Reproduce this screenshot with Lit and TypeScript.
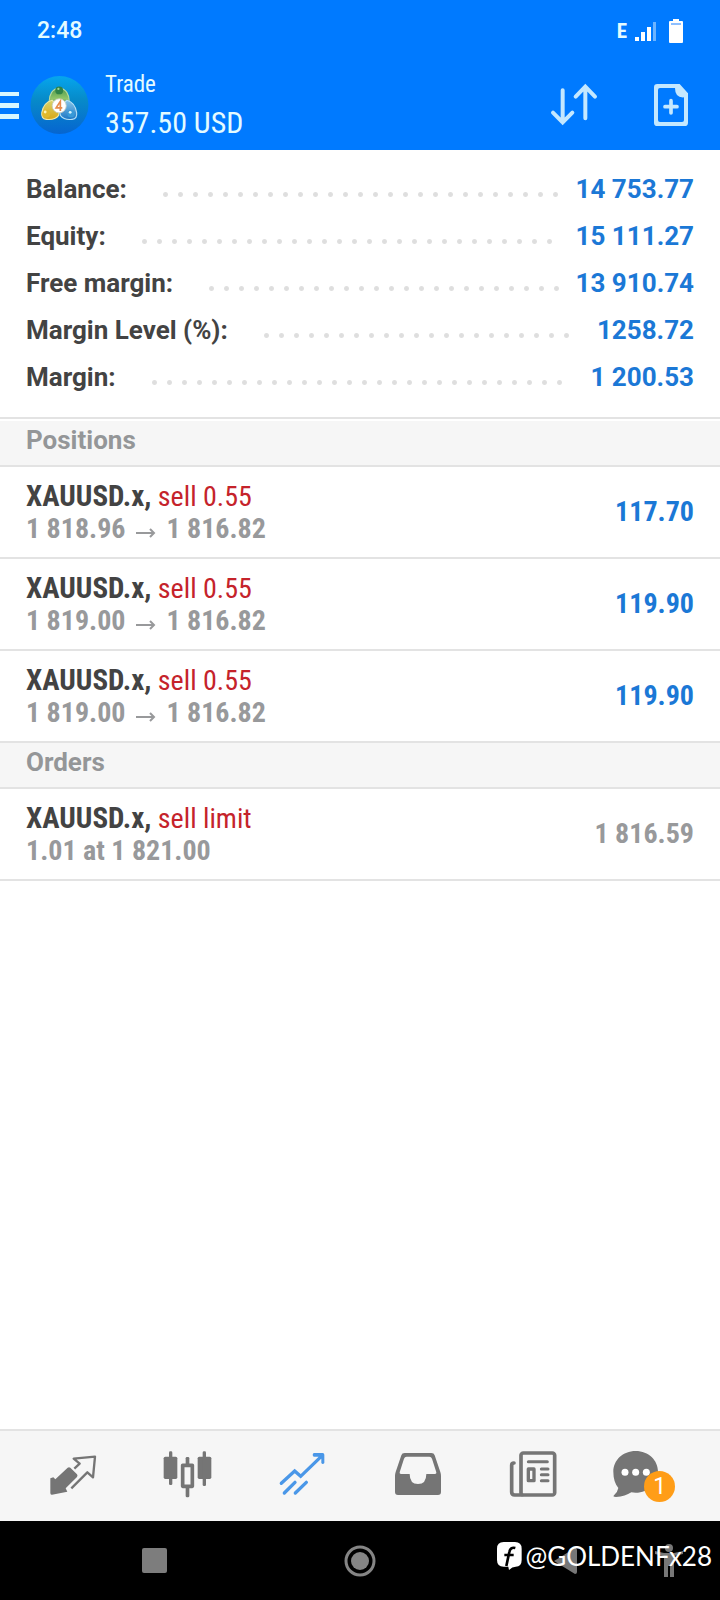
import { LitElement, html, css, svg } from "lit";
import { customElement, state } from "lit/decorators.js";

interface Deal {
  symbol: string;
  side: string;
  from: string;
  to?: string;
  value: string;
  pending?: boolean;
}

const SUMMARY: [string, string][] = [
  ["Balance:", "14 753.77"],
  ["Equity:", "15 111.27"],
  ["Free margin:", "13 910.74"],
  ["Margin Level (%):", "1258.72"],
  ["Margin:", "1 200.53"],
];

const POSITIONS: Deal[] = [
  { symbol: "XAUUSD.x,", side: "sell 0.55", from: "1 818.96", to: "1 816.82", value: "117.70" },
  { symbol: "XAUUSD.x,", side: "sell 0.55", from: "1 819.00", to: "1 816.82", value: "119.90" },
  { symbol: "XAUUSD.x,", side: "sell 0.55", from: "1 819.00", to: "1 816.82", value: "119.90" },
];

const ORDERS: Deal[] = [
  { symbol: "XAUUSD.x,", side: "sell limit", from: "1.01 at 1 821.00", value: "1 816.59", pending: true },
];

const TABS = [
  {
    name: "Quotes",
    box: "131 84 168 168",
    art: svg`
      <path fill="currentColor" d="M202 143q4-3 8 0l20 20q3 4 0 8l-34 34 5 10-46 9q-5 1-5-5v-44l9-3 6 6z"/>
      <path fill="none" stroke="currentColor" stroke-width="7" stroke-linejoin="round" d="M222 146l16-15-18-15 64-6-6 62-17-15-48 48"/>`,
  },
  {
    name: "Charts",
    box: "477 84 168 168",
    art: svg`
      <g fill="currentColor">
        <rect x="491" y="110" width="41" height="67" rx="5"/><rect x="507" y="94" width="10" height="101" rx="4"/>
        <rect x="593" y="110" width="41" height="67" rx="5"/><rect x="608" y="94" width="10" height="104" rx="4"/>
        <rect x="557" y="111" width="11" height="24" rx="4"/><rect x="557" y="198" width="11" height="34" rx="4"/>
      </g>
      <rect x="548" y="136" width="29" height="63" fill="none" stroke="currentColor" stroke-width="11" stroke-linejoin="round"/>`,
  },
  {
    name: "Trade",
    box: "103 84 168 168",
    art: svg`
      <g fill="none" stroke="currentColor" stroke-width="10" stroke-linecap="round">
        <path d="M125 190l40-37 18 16 62-60M134 219l32-32M167 219l33-32" stroke-linejoin="miter"/>
      </g>
      <path fill="currentColor" d="M222 99h27q5 0 5 5v25q-5 6-9 0v-13l-9-6h-14q-6-5 0-11z"/>`,
  },
  {
    name: "History",
    box: "449 84 168 168",
    art: svg`
      <path fill="currentColor" fill-rule="evenodd" d="M493 99h80q8 0 10 7l17 50q2 6 2 12v48q0 9-9 9H473q-9 0-9-9v-48q0-6 2-12l17-50q2-7 10-7zm6 11q-6 0-8 6l-13 41q-1 5 4 5h26q0 30 25 30t25-30h26q5 0 4-5l-13-41q-2-6-8-6z"/>`,
  },
  {
    name: "News",
    box: "75 84 168 168",
    art: svg`
      <g fill="none" stroke="currentColor" stroke-width="11" stroke-linecap="round" stroke-linejoin="round">
        <rect x="123" y="99" width="101" height="126" rx="7"/>
        <path d="M102 129q-7 0-7 7v80q0 9 9 9h22"/>
        <path stroke-width="9" d="M145 125h57M184 147h20M184 164h20M184 182h20"/>
        <rect x="145" y="147" width="17" height="35" stroke-width="10"/>
      </g>`,
  },
  {
    name: "Messages",
    box: "397 84 216 168",
    badge: "1",
    art: svg`
      <path fill="currentColor" d="M468 93c39 0 67 28 67 62s-28 63-67 63q-7 0-13-1-18 12-46 14-11 0-6-5 11-10 13-22c-10-12-15-28-15-49 0-34 28-62 67-62z"/>
      <g fill="#fff"><circle cx="436" cy="157" r="10.500"/><circle cx="468" cy="157" r="10.500"/><circle cx="500" cy="157" r="10.500"/></g>`,
  },
];

@customElement("app-root")
export class AppRoot extends LitElement {
  @state() private active = "Trade";

  static styles = css`
    :host {
      display: flex;
      flex-direction: column;
      min-height: 100vh;
      background: #fff;
      color: #434343;
      font-family: Roboto, "Liberation Sans", sans-serif;
      font-size: 26px;
      line-height: 32px;
    }
    * { box-sizing: border-box; margin: 0; padding: 0; }
    svg { display: block; }
    button { border: 0; background: none; color: inherit; font: inherit; cursor: pointer; }
    ul { list-style: none; }
    .top { background: #007aff; color: #fff; }
    .status {
      display: flex;
      align-items: center;
      height: 60px;
      padding: 2px 37px 0;
      font-size: 23px;
      font-weight: 500;
      color: #e4fbff;
    }
    .clock { flex: 1; }
    .network { font-family: "Roboto Condensed", Roboto, sans-serif; font-size: 21px; font-weight: 700; margin-right: 8px; }
    .signal { margin-right: 12px; }
    .bar { display: flex; align-items: center; height: 90px; padding-right: 21px; }
    .menu { width: 19px; margin-right: 11px; color: #d8f7ff; }
    .logo { margin-right: 16px; }
    .heading { flex: 1; padding-top: 4px; font-family: "Roboto Condensed", Roboto, sans-serif; color: #e4fbff; }
    .heading h1 { font-size: 23px; line-height: 32px; font-weight: 400; }
    .heading p { font-size: 30px; line-height: 44px; }
    .actions { display: flex; gap: 41px; color: #c4e8ff; }
    .summary { margin-bottom: 2px; padding: 16px 26px; border-bottom: 2px solid #e3e3e3; }
    .line { display: flex; align-items: center; height: 47px; padding-bottom: 1px; font-weight: 700; }
    .leader { flex: 1; margin: 11px 11px 0 31px; }
    .dots {
      width: round(down, 100%, 15px);
      height: 5px;
      background: radial-gradient(circle at center, #dedede 0 1px, #e0e0e0 2px, transparent 3px) 0 0 / 15px 5px repeat-x;
    }
    .amount { color: #1b78d6; }
    .section {
      height: 46px;
      padding: 3px 26px;
      background: #f6f6f6;
      border-bottom: 2px solid #e3e3e3;
      font-size: 26px;
      font-weight: 700;
      color: #949698;
    }
    .deal {
      display: flex;
      align-items: center;
      justify-content: space-between;
      height: 92px;
      padding: 0 26px;
      border-bottom: 2px solid #e3e3e3;
      font-family: "Roboto Condensed", Roboto, sans-serif;
      font-size: 28px;
      font-weight: 700;
    }
    .symbol { font-size: 29px; }
    .side { font-size: 28px; font-weight: 400; color: #c5232b; }
    .prices { color: #98999b; }
    .arrow { display: inline-block; margin: 0 4px; }
    .profit { color: #1b78d6; }
    .waiting { color: #98999b; }
    .tabs {
      display: flex;
      margin-top: auto;
      height: 92px;
      padding: 0 14px;
      background: #f6f6f6;
      border-top: 2px solid #e3e3e3;
      color: #757575;
    }
    .tab { flex: 1; display: flex; align-items: center; justify-content: center; }
    .tab.on { color: #4a97e8; }
    .glyph { position: relative; }
    .badge {
      position: absolute;
      left: 32px;
      top: 23px;
      width: 31px;
      height: 31px;
      border-radius: 50%;
      background: #ff9d17;
      color: #fff;
      font-size: 23px;
      line-height: 31px;
      text-align: center;
    }
    .system {
      position: relative;
      display: grid;
      grid-template-columns: repeat(7, 1fr);
      height: 79px;
      background: #000;
      color: #858585;
    }
    .system button { display: flex; align-items: center; justify-content: center; }
    .recent { grid-column: 2; }
    .home { grid-column: 4; }
    .back { grid-column: 6; }
    .access { grid-column: 7; }
    .handle {
      position: absolute;
      right: 8px;
      top: 18px;
      display: flex;
      align-items: center;
      gap: 3px;
      color: #fff;
      font-family: Lato, sans-serif;
      font-size: 26px;
      line-height: 34px;
      pointer-events: none;
    }
  `;

  private deal(d: Deal) {
    return html`<li class="deal">
      <div>
        <p><span class="symbol">${d.symbol}</span> <span class="side">${d.side}</span></p>
        <p class="prices">${d.from}${d.to
          ? html` <svg class="arrow" width="20" height="10" viewBox="0 0 20 10" fill="none" stroke="currentColor" stroke-width="2" role="img" aria-label="to"><path d="M0 5h18M14 1l4 4-4 4"/></svg> ${d.to}`
          : ""}</p>
      </div>
      <span class=${d.pending ? "waiting" : "profit"}>${d.value}</span>
    </li>`;
  }

  render() {
    return html`
      <header class="top">
        <div class="status">
          <span class="clock">2:48</span>
          <span class="network">E</span>
          <svg class="signal" width="22" height="20" viewBox="0 0 22 20" fill="#fff" aria-hidden="true">
            <path d="M0 16h4v4H0zM6 11h4v9H6zM12 6h4v14h-4z"/><path fill="#6db4ff" d="M18 1h3v19h-3z"/>
          </svg>
          <svg width="14" height="24" viewBox="0 0 14 24" aria-hidden="true">
            <path fill="#fff" d="M4 0h6v2h3q1 0 1 1v20q0 1-1 1H1q-1 0-1-1V3q0-1 1-1h3z"/><path fill="#8ebfff" d="M2 4h10v2H2z"/>
          </svg>
        </div>
        <div class="bar">
          <button class="menu" aria-label="Menu">
            <svg width="19" height="27" viewBox="0 0 19 27" fill="currentColor"><path d="M0 0h19v4H0zM0 11h19v5H0zM0 22h19v5H0z"/></svg>
          </button>
          <svg class="logo" width="59" height="60" viewBox="0 0 210 210" aria-hidden="true">
            <defs>
              <linearGradient id="sky" x1="0" y1="0" x2="0" y2="1"><stop offset="0" stop-color="#06a6ee"/><stop offset=".4" stop-color="#078bc9"/><stop offset="1" stop-color="#0665d0"/></linearGradient>
              <linearGradient id="green" x1="0" y1="0" x2="0" y2="1"><stop offset="0" stop-color="#4f9a4c"/><stop offset=".5" stop-color="#8fc56a"/><stop offset="1" stop-color="#38803e"/></linearGradient>
              <linearGradient id="gold" x1="0" y1="0" x2="0" y2="1"><stop offset="0" stop-color="#d9d46a"/><stop offset="1" stop-color="#d8a719"/></linearGradient>
              <linearGradient id="blue" x1="0" y1="0" x2="0" y2="1"><stop offset="0" stop-color="#87c5e8"/><stop offset="1" stop-color="#1c76c5"/></linearGradient>
            </defs>
            <circle cx="105" cy="105" r="103" fill="url(#sky)"/>
            <g stroke-width="4">
              <path d="M104 46c24 0 36 22 36 48l-36 24-36-24c0-26 12-48 36-48z" fill="url(#green)" stroke="#b9dba0"/>
              <path d="M78 88c-22 6-33 26-36 44q-3 22 16 24 30 4 44-14l4-32z" fill="url(#gold)" stroke="#f1e9a8"/>
              <path d="M132 88c22 6 31 26 34 44q3 22-16 24-28 4-42-14l-4-32z" fill="url(#blue)" stroke="#b5dff5"/>
            </g>
            <circle cx="104" cy="53" r="14" fill="#2f8348"/><circle cx="101" cy="48" r="4" fill="#9ed592"/>
            <circle cx="58" cy="136" r="14" fill="#e0b92b"/><circle cx="54" cy="130" r="5" fill="#fff5b4"/>
            <circle cx="146" cy="136" r="13" fill="#389ad8"/><circle cx="143" cy="131" r="5" fill="#d9f4ff"/>
            <circle cx="104" cy="108" r="25" fill="#fff" stroke="#c9cfc2" stroke-width="3"/>
            <path d="M108 126V92l-15 23h22" fill="none" stroke="#e88b4b" stroke-width="6"/>
          </svg>
          <div class="heading">
            <h1>Trade</h1>
            <p>357.50 USD</p>
          </div>
          <div class="actions">
            <button aria-label="Sort">
              <svg width="56" height="56" viewBox="198 231 168 168" fill="none" stroke="currentColor" stroke-width="12" stroke-linecap="round">
                <path d="M248 271v96M219 338l29 29 29-29M316 355v-95M287 290l29-30 29 30"/>
              </svg>
            </button>
            <button aria-label="New order">
              <svg width="56" height="56" viewBox="489 231 168 168">
                <path fill="currentColor" fill-rule="evenodd" d="M532 252h67l25 28v88q0 10-10 10h-82q-10 0-10-10V262q0-10 10-10zm8 12q-6 0-6 6v90q0 6 6 6h66q6 0 6-6v-68q-27 2-27-28z"/>
                <path fill="none" stroke="currentColor" stroke-width="11" stroke-linecap="round" d="M573 302v37M555 320h36"/>
              </svg>
            </button>
          </div>
        </div>
      </header>

      <main>
        <dl class="summary">
          ${SUMMARY.map(([label, amount]) => html`
            <div class="line"><dt>${label}</dt><div class="leader"><div class="dots"></div></div><dd class="amount">${amount}</dd></div>`)}
        </dl>
        <section>
          <h2 class="section">Positions</h2>
          <ul>${POSITIONS.map((d) => this.deal(d))}</ul>
        </section>
        <section>
          <h2 class="section">Orders</h2>
          <ul>${ORDERS.map((d) => this.deal(d))}</ul>
        </section>
      </main>

      <nav class="tabs">
        ${TABS.map((t) => html`
          <button class="tab ${t.name === this.active ? "on" : ""}" aria-label=${t.name} @click=${() => (this.active = t.name)}>
            <span class="glyph">
              <svg width=${t.badge ? 72 : 56} height="56" viewBox=${t.box}>${t.art}</svg>
              ${t.badge ? html`<span class="badge">${t.badge}</span>` : ""}
            </span>
          </button>`)}
      </nav>

      <footer class="system">
        <button class="recent" aria-label="Recent apps"><svg width="25" height="25"><rect width="25" height="25" rx="2" fill="#7d7d7d"/></svg></button>
        <button class="home" aria-label="Home">
          <svg width="32" height="32" viewBox="0 0 32 32"><circle cx="16" cy="16" r="14" fill="none" stroke="currentColor" stroke-width="3"/><circle cx="16" cy="16" r="9" fill="currentColor"/></svg>
        </button>
        <button class="back" aria-label="Back"><svg width="23" height="26" viewBox="0 0 23 26"><path fill="#777" d="M0 13L21 0q2 0 2 2v22q0 2-2 2z"/></svg></button>
        <button class="access" aria-label="Accessibility">
          <svg width="28" height="34" viewBox="0 0 28 34" fill="#777"><circle cx="14" cy="4" r="4"/><path d="M0 7l9 2h10l9-2v3l-9 2v21h-4V22h-2v11H9V12l-9-2z"/></svg>
        </button>
        <div class="handle">
          <svg width="25" height="28" viewBox="0 0 75 84" aria-hidden="true">
            <path fill="#fff" d="M20 0h34q20 0 20 20v34q0 20-18 20-10 0-20 10l-2-10H20Q0 74 0 54V20Q0 0 20 0z"/>
            <path fill="none" stroke="#000" stroke-width="8" d="M55 18q-15-4-18 12l-9 42M22 39h28"/>
          </svg>
          <span>@GOLDENFx28</span>
        </div>
      </footer>
    `;
  }
}
